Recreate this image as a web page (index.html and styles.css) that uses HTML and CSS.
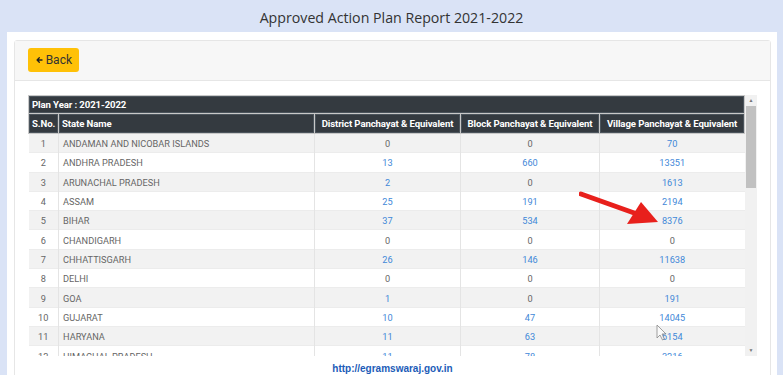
FILE: index.html
```html
<!DOCTYPE html>
<html lang="en">
<head>
    <meta charset="UTF-8">
    <title>Approved Action Plan Report 2021-2022</title>
    <link rel="stylesheet" href="styles.css">
</head>
<body>
    <h1 class="page-title">Approved Action Plan Report 2021-2022</h1>

    <div class="page">
        <div class="card">
            <div class="card-header">
                <button class="back-btn">
                    <svg width="11" height="10" viewBox="0 0 11 10"><path d="M10 5H2.5M5.5 1.3L1.8 5 5.5 8.7" fill="none" stroke="#222" stroke-width="2.2" stroke-linecap="round" stroke-linejoin="round"/></svg>
                    Back
                </button>
            </div>

            <div class="card-body">
                <div class="table-wrap">
                    <div class="scroll-area">
                        <table class="report">
                            <colgroup>
                                <col class="col-sno">
                                <col class="col-state">
                                <col class="col-dp">
                                <col class="col-bp">
                                <col class="col-vp">
                            </colgroup>
                            <thead>
                                <tr class="plan-row">
                                    <th colspan="5">Plan Year : 2021-2022</th>
                                </tr>
                                <tr>
                                    <th class="left">S.No.</th>
                                    <th class="left">State Name</th>
                                    <th>District Panchayat &amp; Equivalent</th>
                                    <th>Block Panchayat &amp; Equivalent</th>
                                    <th>Village Panchayat &amp; Equivalent</th>
                                </tr>
                            </thead>
                            <tbody id="rows"></tbody>
                        </table>
                    </div>
                    <div class="scrollbar">
                        <span class="sb-arrow">&#9650;</span>
                        <div class="sb-track"><div class="sb-thumb"></div></div>
                        <span class="sb-arrow">&#9660;</span>
                    </div>
                </div>
            </div>

            <div class="card-footer">
                <a href="#" class="site-link">http://egramswaraj.gov.in</a>
            </div>
        </div>
    </div>

    <!-- annotation drawn over the screenshot -->
    <svg class="red-arrow" width="100" height="50" viewBox="0 0 100 50">
        <path d="M2 4 L58 24" stroke="#e8201c" stroke-width="5" stroke-linecap="round"/>
        <path d="M79 32 L48 34 L62 12 Z" fill="#e8201c"/>
    </svg>
    <svg class="cursor" width="12" height="18" viewBox="0 0 12 18">
        <path d="M1 1 L1 14 L4 11 L6.5 16 L8.5 15 L6 10 L10 10 Z" fill="rgba(255,255,255,0.6)" stroke="#888" stroke-width="0.8"/>
    </svg>

    <script>
        const states = [
            ['ANDAMAN AND NICOBAR ISLANDS', 0, 0, 70],
            ['ANDHRA PRADESH', 13, 660, 13351],
            ['ARUNACHAL PRADESH', 2, 0, 1613],
            ['ASSAM', 25, 191, 2194],
            ['BIHAR', 37, 534, 8376],
            ['CHANDIGARH', 0, 0, 0],
            ['CHHATTISGARH', 26, 146, 11638],
            ['DELHI', 0, 0, 0],
            ['GOA', 1, 0, 191],
            ['GUJARAT', 10, 47, 14045],
            ['HARYANA', 11, 63, 6154],
            ['HIMACHAL PRADESH', 11, 78, 3216]
        ];

        const cell = (value) => value === 0 ? '0' : `<a href="#">${value}</a>`;

        const tbody = document.getElementById('rows');
        states.forEach((s, i) => {
            const tr = document.createElement('tr');
            tr.innerHTML = `
                <td>${i + 1}</td>
                <td class="left">${s[0]}</td>
                <td>${cell(s[1])}</td>
                <td>${cell(s[2])}</td>
                <td>${cell(s[3])}</td>
            `;
            tbody.appendChild(tr);
        });
    </script>
</body>
</html>
```

FILE: styles.css
```css
* {
    margin: 0;
    padding: 0;
    box-sizing: border-box;
}

body {
    background-color: #dae3f6;
    font-family: 'Roboto', 'Liberation Sans', sans-serif;
    color: #555;
    height: 375px;
    overflow: hidden;
}

.page-title {
    height: 32px;
    line-height: 35px;
    text-align: center;
    font-family: 'Open Sans', sans-serif;
    font-weight: 400;
    font-size: 14.2px;
    color: #333;
}

.page {
    margin: 0 6px 0 7px;
    background-color: #fff;
    padding: 8px 6px 0 7px;
    height: 350px;
}

.card {
    border: 1px solid #e6e6e6;
    border-radius: 3px;
    height: 100%;
}

.card-header {
    background-color: #f7f7f7;
    border-bottom: 1px solid #e6e6e6;
    padding: 7px 13px 8px;
}

.back-btn {
    display: flex;
    align-items: center;
    gap: 3px;
    background-color: #ffc107;
    border: none;
    border-radius: 3px;
    height: 24px;
    width: 51px;
    padding: 0 7px 0 8px;
    font-family: 'Roboto', sans-serif;
    font-size: 12px;
    color: #333;
}

.card-body {
    padding: 14px 13px 0;
}

.table-wrap {
    display: flex;
    height: 261px;
}

.scroll-area {
    flex: 1;
    overflow: hidden;
}

.scrollbar {
    width: 12px;
    background-color: #f1f1f1;
    display: flex;
    flex-direction: column;
}

.sb-arrow {
    height: 11px;
    font-size: 5px;
    line-height: 11px;
    text-align: center;
    color: #777;
}

.sb-track {
    flex: 1;
}

.sb-thumb {
    margin: 0 1px;
    height: 82px;
    background-color: #c1c1c1;
}

.report {
    width: 716px;
    border-collapse: collapse;
    table-layout: fixed;
    font-size: 9.2px;
}

.col-sno { width: 30px; }
.col-state { width: 256px; }
.col-dp { width: 146px; }
.col-bp { width: 139px; }
.col-vp { width: 145px; }

.report th {
    background-color: #343a40;
    color: #fff;
    font-weight: 700;
    font-size: 9.6px;
    letter-spacing: -0.1px;
    border: 1px solid #c8c8c8;
    box-shadow: inset 0 0 0 1px #4b545c;
    height: 20px;
    padding: 0 3px;
    text-align: center;
    white-space: nowrap;
}

.report .plan-row th {
    height: 18px;
    text-align: left;
    padding: 0 3px;
}

.report th.left,
.report td.left {
    text-align: left;
}

.report td {
    height: 19.3px;
    padding: 1px 4px 0;
    text-align: center;
    color: #666;
    white-space: nowrap;
    border-left: 1px solid #e4e4e4;
    border-top: 1px solid #ececec;
}

.report td:first-child {
    border-left: none;
}

.report tbody tr:nth-child(odd) td {
    background-color: #f2f2f2;
}

.report tbody tr:nth-child(even) td {
    background-color: #fff;
}

.report a {
    color: #3f88d8;
    text-decoration: none;
}

.card-footer {
    text-align: center;
    padding-top: 1px;
}

.site-link {
    font-family: 'Liberation Sans', Arial, sans-serif;
    font-weight: 700;
    font-size: 10px;
    color: #1c5cb8;
    text-decoration: none;
}

.red-arrow {
    position: absolute;
    left: 579px;
    top: 190px;
}

.cursor {
    position: absolute;
    left: 656px;
    top: 324px;
}
```
